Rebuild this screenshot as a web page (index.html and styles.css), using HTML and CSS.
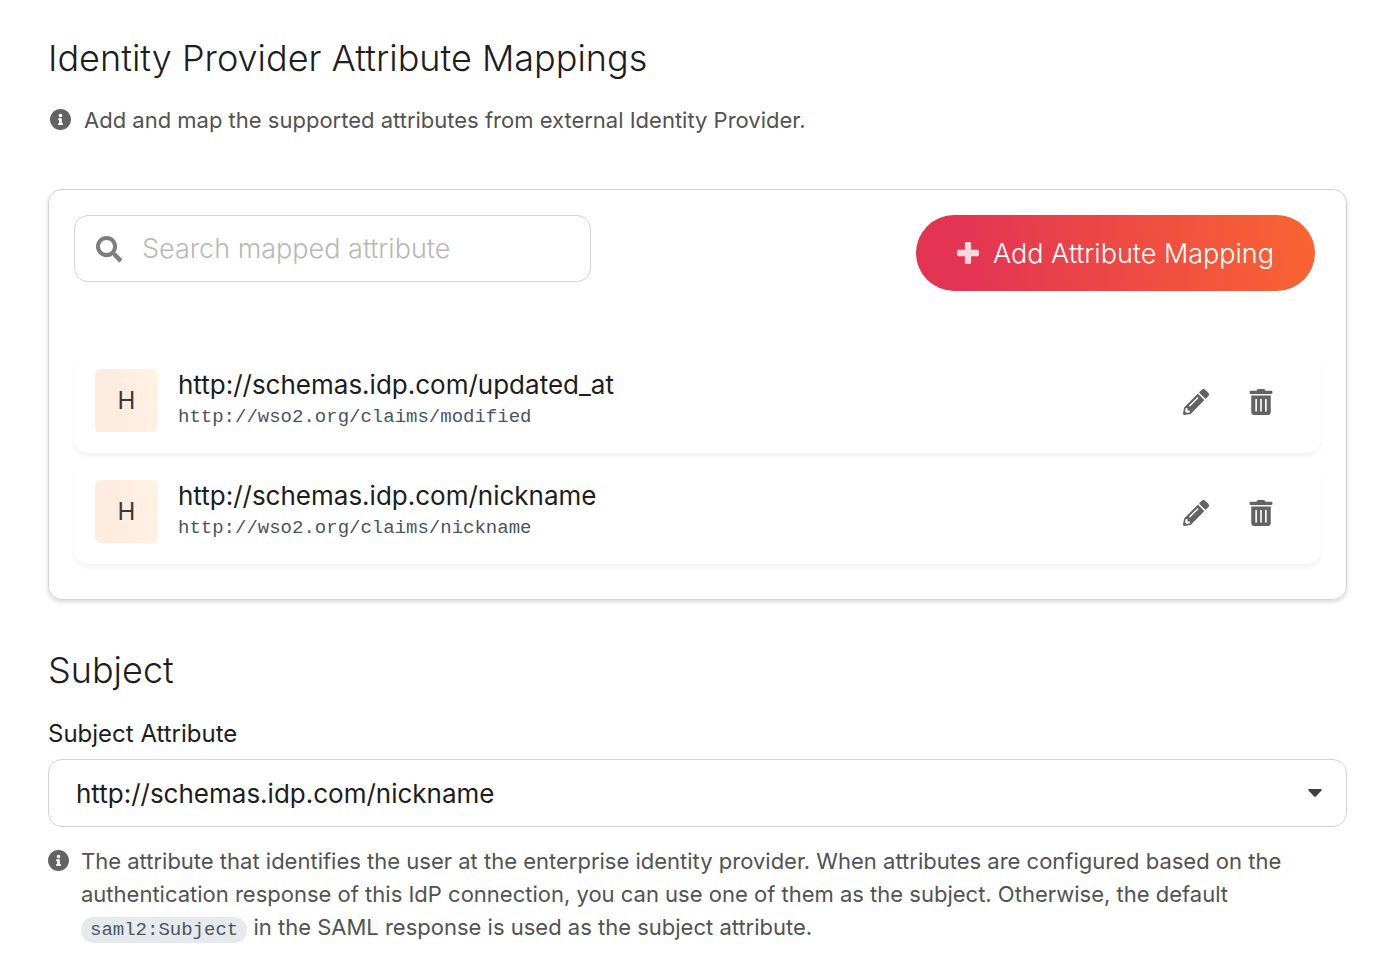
FILE: index.html
```html
<!DOCTYPE html>
<html lang="en">
<head>
<meta charset="utf-8">
<meta name="viewport" content="width=device-width, initial-scale=1">
<title>Identity Provider Attribute Mappings</title>
<link rel="stylesheet" href="styles.css">
</head>
<body>
<svg class="sprite" aria-hidden="true">
  <symbol id="info" viewBox="8 8 496 496"><path d="M256 8C119.043 8 8 119.083 8 256c0 136.997 111.043 248 248 248s248-111.003 248-248C504 119.083 392.957 8 256 8zm0 110c23.196 0 42 18.804 42 42s-18.804 42-42 42-42-18.804-42-42 18.804-42 42-42zm56 254c0 6.627-5.373 12-12 12h-88c-6.627 0-12-5.373-12-12v-24c0-6.627 5.373-12 12-12h12v-64h-12c-6.627 0-12-5.373-12-12v-24c0-6.627 5.373-12 12-12h64c6.627 0 12 5.373 12 12v100h12c6.627 0 12 5.373 12 12v24z"/></symbol>
  <symbol id="search" viewBox="0 0 512 512"><path d="M505 442.7L405.3 343c-4.5-4.5-10.6-7-17-7H372c27.6-35.3 44-79.7 44-128C416 93.1 322.9 0 208 0S0 93.1 0 208s93.1 208 208 208c48.3 0 92.7-16.4 128-44v16.3c0 6.4 2.5 12.5 7 17l99.7 99.7c9.4 9.4 24.6 9.4 33.9 0l28.3-28.3c9.4-9.4 9.4-24.6.1-34zM208 336c-70.7 0-128-57.2-128-128 0-70.7 57.2-128 128-128 70.7 0 128 57.2 128 128 0 70.7-57.2 128-128 128z"/></symbol>
  <symbol id="plus" viewBox="0 32 448 448"><path d="M416 192H288V64c0-17.67-14.33-32-32-32h-64c-17.67 0-32 14.33-32 32v128H32c-17.67 0-32 14.33-32 32v64c0 17.67 14.33 32 32 32h128v128c0 17.67 14.33 32 32 32h64c17.67 0 32-14.33 32-32V320h128c17.67 0 32-14.33 32-32v-64c0-17.67-14.33-32-32-32z"/></symbol>
  <symbol id="pencil" viewBox="0 0 512 512"><path d="M497.9 142.1l-46.1 46.1c-4.7 4.7-12.3 4.7-17 0l-111-111c-4.7-4.7-4.7-12.3 0-17l46.1-46.1c18.7-18.7 49.1-18.7 67.9 0l60.1 60.1c18.8 18.7 18.8 49.1 0 67.9zM284.2 99.8L21.6 362.4.4 483.9c-2.9 16.4 11.4 30.6 27.8 27.8l121.5-21.3 262.6-262.6c4.7-4.7 4.7-12.3 0-17l-111-111c-4.8-4.7-12.4-4.7-17.1 0zM124.1 339.9c-5.5-5.5-5.5-14.3 0-19.8l154-154c5.5-5.5 14.3-5.5 19.8 0s5.500 14.300 0 19.800l-154 154c-5.500 5.500-14.300 5.500-19.800 0zM88 424h48v36.300l-64.500 11.300-31.100-31.100L51.700 376H88v48z"/></symbol>
  <symbol id="trash" viewBox="0 0 448 512"><path d="M32 464a48 48 0 0 0 48 48h288a48 48 0 0 0 48-48V128H32zm272-256a16 16 0 0 1 32 0v224a16 16 0 0 1-32 0zm-96 0a16 16 0 0 1 32 0v224a16 16 0 0 1-32 0zm-96 0a16 16 0 0 1 32 0v224a16 16 0 0 1-32 0zM432 32H312l-9.4-18.7A24 24 0 0 0 281.1 0H166.8a23.72 23.72 0 0 0-21.4 13.3L136 32H16A16 16 0 0 0 0 48v32a16 16 0 0 0 16 16h416a16 16 0 0 0 16-16V48a16 16 0 0 0-16-16z"/></symbol>
</svg>
<main class="page">
  <h1 class="heading">Identity Provider Attribute Mappings</h1>
  <p class="hint hint-intro">
    <svg class="icon-info" aria-hidden="true"><use href="#info"/></svg>
    <span>Add and map the supported attributes from external Identity Provider.</span>
  </p>

  <section class="card" aria-label="Attribute mappings">
    <div class="toolbar">
      <div class="search">
        <svg class="icon" aria-hidden="true"><use href="#search"/></svg>
        <input class="search-input" type="text" placeholder="Search mapped attribute" aria-label="Search mapped attribute">
      </div>
      <button class="add" type="button">
        <svg class="icon-plus" aria-hidden="true"><use href="#plus"/></svg>
        <span>Add Attribute Mapping</span>
      </button>
    </div>
    <ul class="list">
      <li class="row">
        <span class="avatar" aria-hidden="true">H</span>
        <div class="names">
          <span class="name">http://schemas.idp.com/updated_at</span>
          <code class="claim">http://wso2.org/claims/modified</code>
        </div>
        <div class="actions">
          <button class="action" type="button" aria-label="Edit updated_at"><svg class="icon" aria-hidden="true"><use href="#pencil"/></svg></button>
          <button class="action" type="button" aria-label="Delete updated_at"><svg class="icon" aria-hidden="true"><use href="#trash"/></svg></button>
        </div>
      </li>
      <li class="row">
        <span class="avatar" aria-hidden="true">H</span>
        <div class="names">
          <span class="name">http://schemas.idp.com/nickname</span>
          <code class="claim">http://wso2.org/claims/nickname</code>
        </div>
        <div class="actions">
          <button class="action" type="button" aria-label="Edit nickname"><svg class="icon" aria-hidden="true"><use href="#pencil"/></svg></button>
          <button class="action" type="button" aria-label="Delete nickname"><svg class="icon" aria-hidden="true"><use href="#trash"/></svg></button>
        </div>
      </li>
    </ul>
  </section>

  <h2 class="heading">Subject</h2>
  <label class="label" for="subject">Subject Attribute</label>
  <div class="dropdown">
    <select class="select" id="subject">
      <option>http://schemas.idp.com/nickname</option>
      <option>http://schemas.idp.com/updated_at</option>
    </select>
    <svg class="caret" viewBox="0 0 14 8" aria-hidden="true"><path d="M1.2 0h11.6c1 0 1.3 1 .7 1.6L8.1 7.2a1.5 1.5 0 0 1-2.200 0L.5 1.600C-.1 1 .2 0 1.200 0z"/></svg>
  </div>
  <p class="hint">
    <svg class="icon-info" aria-hidden="true"><use href="#info"/></svg>
    <span>The attribute that identifies the user at the enterprise identity provider. When attributes are configured based on the authentication response of this IdP connection, you can use one of them as the subject. Otherwise, the default <code class="pill">saml2:Subject</code> in the SAML response is used as the subject attribute.</span>
  </p>
</main>
</body>
</html>
```
FILE: styles.css
```css
* { box-sizing: border-box; }

body {
  margin: 0;
  background: #fff;
  color: #1d1d1d;
  font-family: Inter, "Liberation Sans", sans-serif;
  font-size: 26px;
}

button, input, select { font: inherit; color: inherit; }

svg { flex: none; fill: currentColor; }

.sprite { position: absolute; width: 0; height: 0; }

.page { padding: 36px 43px 24px 48px; }

.heading {
  margin: 0;
  font-size: 36px;
  font-weight: 300;
  line-height: 44px;
}

.hint {
  display: flex;
  gap: 12px;
  margin: 18px 0 0;
  color: #525252;
  font-size: 22px;
  line-height: 33px;
}

.hint-intro { gap: 13px; margin: 24px 0 0; padding-left: 2px; }

.icon-info { width: 21px; height: 21px; margin-top: 5px; color: #636363; }

.card {
  margin: 52px 0 48px;
  padding: 25px;
  border: 1px solid #d4d4d5;
  border-radius: 14px;
  box-shadow: 0 2px 4px rgba(34, 36, 38, .18);
}

.toolbar {
  display: flex;
  justify-content: space-between;
  align-items: flex-start;
  padding-right: 6px;
}

.search {
  display: flex;
  align-items: center;
  flex: 0 1 517px;
  gap: 20px;
  height: 67px;
  padding: 0 21px;
  border: 1px solid #d4d4d5;
  border-radius: 14px;
  color: #7d7d7d;
}

.search-input {
  flex: 1;
  min-width: 0;
  padding: 0;
  border: 0;
  outline: 0;
  background: none;
  font-size: 27px;
  font-weight: 300;
}

.search-input::placeholder { color: #b8b8b8; opacity: 1; }

.icon { display: block; width: 26px; height: 26px; }

.add {
  display: flex;
  align-items: center;
  gap: 14px;
  height: 76px;
  padding: 0 41px;
  border: 0;
  border-radius: 38px;
  background: linear-gradient(80deg, #e33454 12%, #f96531 100%);
  color: #fff;
  font-size: 27px;
  font-weight: 300;
}

.icon-plus { width: 22px; height: 22px; opacity: .8; }

.list {
  display: grid;
  gap: 11px;
  margin: 62px 0 10px;
  padding: 0;
  list-style: none;
}

.row {
  display: flex;
  align-items: center;
  gap: 20px;
  height: 100px;
  padding: 0 47px 6px 21px;
  border-radius: 14px;
  box-shadow: 0 3px 4px rgba(40, 40, 90, .06);
}

.avatar {
  display: grid;
  place-items: center;
  width: 63px;
  height: 63px;
  border-radius: 6px;
  background: linear-gradient(80deg, #ffece1 45%, #fff4e3);
  color: #383838;
  font-size: 24px;
}

.names { display: grid; flex: 1; }

.name { line-height: 34px; }

.claim { color: #4a5560; font: 19px/30px "Liberation Mono", monospace; }

.actions { display: flex; gap: 39px; padding-top: 3px; }

.action { padding: 0; border: 0; background: none; color: #636363; }

.label { display: block; margin: 28px 0 11px; font-size: 24px; line-height: 28px; }

.dropdown { display: grid; align-items: center; }

.select, .caret { grid-area: 1 / 1; }

.select {
  width: 100%;
  height: 68px;
  padding: 0 60px 0 27px;
  border: 1px solid #d4d4d5;
  border-radius: 14px;
  appearance: none;
  background: #fff;
}

.caret {
  justify-self: end;
  width: 14px;
  height: 8px;
  margin-right: 25px;
  color: #404040;
  pointer-events: none;
}

.pill {
  padding: 2px 9px;
  border-radius: 13px;
  background: #e6eaed;
  color: #4a5560;
  font: 19px/22px "Liberation Mono", monospace;
}
```
